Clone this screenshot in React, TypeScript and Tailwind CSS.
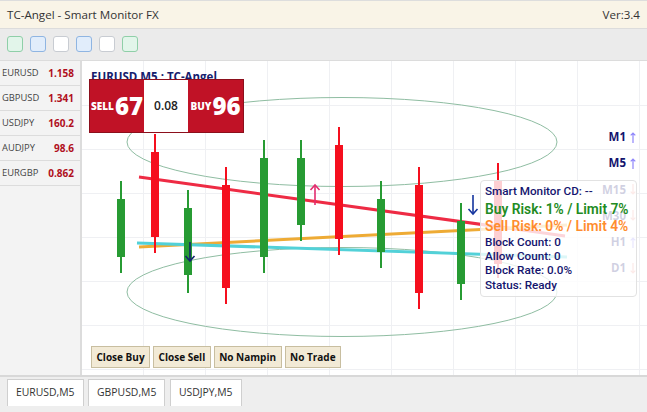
import React from 'react';

const FONT = "font-['Open_Sans','Noto_Sans',sans-serif]";

const symbols = [
  { name: 'EURUSD', price: '1.158' },
  { name: 'GBPUSD', price: '1.341' },
  { name: 'USDJPY', price: '160.2' },
  { name: 'AUDJPY', price: '98.6' },
  { name: 'EURGBP', price: '0.862' },
];

const swatches = [
  'bg-[#e2f5ea] border-[#8fcfa8]',
  'bg-[#e1edfb] border-[#8fb5e2]',
  'bg-white border-[#c8ccd2]',
  'bg-[#e1edfb] border-[#8fb5e2]',
  'bg-white border-[#c8ccd2]',
  'bg-[#e2f5ea] border-[#8fcfa8]',
];

// x center, wick top/bottom, body top/bottom
const candles = [
  { x: 121, wt: 181, wb: 273, bt: 199, bb: 257, up: true },
  { x: 155, wt: 134, wb: 253, bt: 152, bb: 237, up: false },
  { x: 188, wt: 190, wb: 293, bt: 208, bb: 275, up: true },
  { x: 226, wt: 167, wb: 304, bt: 185, bb: 288, up: false },
  { x: 264, wt: 140, wb: 273, bt: 158, bb: 257, up: true },
  { x: 301, wt: 140, wb: 241, bt: 158, bb: 225, up: true },
  { x: 339, wt: 127, wb: 255, bt: 145, bb: 239, up: false },
  { x: 381, wt: 181, wb: 268, bt: 199, bb: 252, up: true },
  { x: 419, wt: 167, wb: 309, bt: 185, bb: 293, up: false },
  { x: 461, wt: 203, wb: 300, bt: 221, bb: 284, up: true },
  { x: 498, wt: 163, wb: 278, bt: 181, bb: 264, up: false },
];

const timeframes = [
  { label: 'M1', up: true },
  { label: 'M5', up: true },
  { label: 'M15', up: false },
  { label: 'M30', up: false },
  { label: 'H1', up: true },
  { label: 'D1', up: false },
];

const tabs = ['EURUSD,M5', 'GBPUSD,M5', 'USDJPY,M5'];

const Arrow = ({ x, y1, y2, color }: { x: number; y1: number; y2: number; color: string }) => {
  const dir = y2 > y1 ? -1 : 1;
  return (
    <g stroke={color} strokeWidth="1.6" fill="none">
      <path d={`M${x} ${y1}V${y2}`} />
      <path d={`M${x - 4.5} ${y2 + dir * 5}L${x} ${y2}L${x + 4.5} ${y2 + dir * 5}`} />
    </g>
  );
};

const TrendMark = ({ up }: { up: boolean }) => (
  <svg viewBox="0 0 6 11" className="w-[6px] h-[11px]" fill="none" stroke={up ? '#8f86fb' : '#f2968c'} strokeWidth="1.2">
    {up ? <path d="M3 11V1M.7 3.4L3 1l2.3 2.4" /> : <path d="M3 0V10M.7 7.6L3 10l2.3-2.4" />}
  </svg>
);

const Chart = () => (
  <svg viewBox="82 61 565 314" className="block w-full h-full">
    <g stroke="#eff0f3" strokeWidth="1">
      {[143, 205, 267, 329, 391, 453, 515, 577, 639].map((x) => (
        <path key={x} d={`M${x + 0.5} 61V375`} />
      ))}
      {[105, 149, 193, 237, 281, 325, 369].map((y) => (
        <path key={y} d={`M82 ${y + 0.5}H647`} />
      ))}
    </g>
    <ellipse cx="342" cy="142" rx="215" ry="44.5" fill="none" stroke="#8fbda2" strokeWidth="1" />
    <ellipse cx="342" cy="292" rx="215" ry="44.5" fill="none" stroke="#8fbda2" strokeWidth="1" />
    <path d="M139 177L565 236" stroke="#ee2b44" strokeWidth="3" />
    <path d="M139 247L567 225" stroke="#eeab35" strokeWidth="3" />
    <path d="M137 243L567 257" stroke="#52d1d8" strokeWidth="3" />
    {candles.map((c) => (
      <g key={c.x} fill={c.up ? '#279b33' : '#f50f1e'}>
        <rect x={c.x - 1} y={c.wt} width="2" height={c.wb - c.wt} />
        <rect x={c.x - 4} y={c.bt} width="8" height={c.bb - c.bt} />
      </g>
    ))}
    <Arrow x={315} y1={205} y2={185} color="#e32c6f" />
    <Arrow x={190} y1={242} y2={261} color="#14246e" />
    <Arrow x={473} y1={195} y2={214} color="#14349e" />
  </svg>
);

export default function App() {
  return (
    <div className={`w-[647px] h-[412px] overflow-hidden flex flex-col bg-white text-[#222] ${FONT}`}>
      <div className="h-[28px] shrink-0 flex items-center justify-between px-[7px] bg-[#f9f4e7] border-t border-[#ddd] text-[11.6px] text-[#333]">
        <span>TC-Angel - Smart Monitor FX</span>
        <span>Ver:3.4</span>
      </div>
      <div className="h-[33px] shrink-0 flex items-start gap-[7px] pt-[7px] px-[7px] bg-[#ebebeb] border-y border-[#dcdcdc]">
        {swatches.map((s, i) => (
          <div key={i} className={`w-4 h-4 rounded-[3px] border ${s}`} />
        ))}
      </div>
      <div className="flex-1 flex min-h-0">
        <div className="w-[82px] shrink-0 bg-[#f3f3f3] border-r-2 border-[#dcdcdc]">
          {symbols.map((s) => (
            <div key={s.name} className="h-[25px] flex items-center justify-between pl-[2px] pr-[6px] border-b border-[#dcdcdc]">
              <span className="text-[9.4px] text-[#444]">{s.name}</span>
              <span className="text-[10px] font-bold text-[#b00f20]">{s.price}</span>
            </div>
          ))}
        </div>
        <div className="relative flex-1 min-w-0">
          <Chart />
          <div className="absolute left-[9px] top-[8px] text-[11.5px] leading-[16px] font-bold text-[#14206e]">EURUSD M5 : TC-Angel</div>
          <div className="absolute left-[7px] top-[18px] w-[155px] h-[54px] flex items-stretch bg-[#c01226] border border-[#8c0f1c] text-white font-extrabold">
            <div className="w-[54px] flex items-center justify-center gap-px">
              <span className="text-[10px]">SELL</span>
              <span className="text-[24px] leading-none">67</span>
            </div>
            <div className="w-[44px] flex items-center justify-center bg-white text-[#222] text-[12px] font-semibold">0.08</div>
            <div className="flex-1 flex items-center justify-center gap-px">
              <span className="text-[10px]">BUY</span>
              <span className="text-[24px] leading-none">96</span>
            </div>
          </div>
          <div className="absolute right-[11px] top-[68px] flex flex-col items-end gap-[10.3px] text-[11.5px] leading-[16px] font-bold">
            {timeframes.map((t) => (
              <div key={t.label} className="h-[16px] flex items-center gap-[4px] text-[#14146e]">
                <span>{t.label}</span>
                <TrendMark up={t.up} />
              </div>
            ))}
          </div>
          <div className="absolute left-[398px] top-[119px] w-[157px] h-[117px] rounded-[4px] border border-[#e2e2e2] bg-white/80 pl-[4px] pt-[3px] font-['Roboto',sans-serif] text-[11.7px] leading-[14.4px] font-medium text-[#14146e]">
            <div className="leading-[15px]">Smart Monitor CD: --</div>
            <div className="text-[13.8px] leading-[17px] mt-[1.5px] font-semibold text-[#228b22]">Buy Risk: 1% / Limit 7%</div>
            <div className="text-[13.8px] leading-[17px] font-semibold text-[#ff8c2e]">Sell Risk: 0% / Limit 4%</div>
            <div>Block Count: 0</div>
            <div>Allow Count: 0</div>
            <div>Block Rate: 0.0%</div>
            <div>Status: Ready</div>
          </div>
          <div className="absolute left-[9px] top-[285px] flex gap-[3px]">
            {['Close Buy', 'Close Sell', 'No Nampin', 'No Trade'].map((b) => (
              <button key={b} className="h-[22px] px-[4.5px] bg-[#f2ead6] border border-[#c8bea0] text-[10px] font-bold text-[#111]">{b}</button>
            ))}
          </div>
        </div>
      </div>
      <div className="h-[37px] shrink-0 flex items-start gap-[4.5px] pl-[7px] pt-[2px] bg-[#eeeeee] border-t-2 border-[#d8d8d8]">
        {tabs.map((t) => (
          <div key={t} className="h-[27px] px-[8px] flex items-center bg-white border border-b-0 border-[#cfcfcf] text-[10.4px] text-[#333]">{t}</div>
        ))}
      </div>
    </div>
  );
}
